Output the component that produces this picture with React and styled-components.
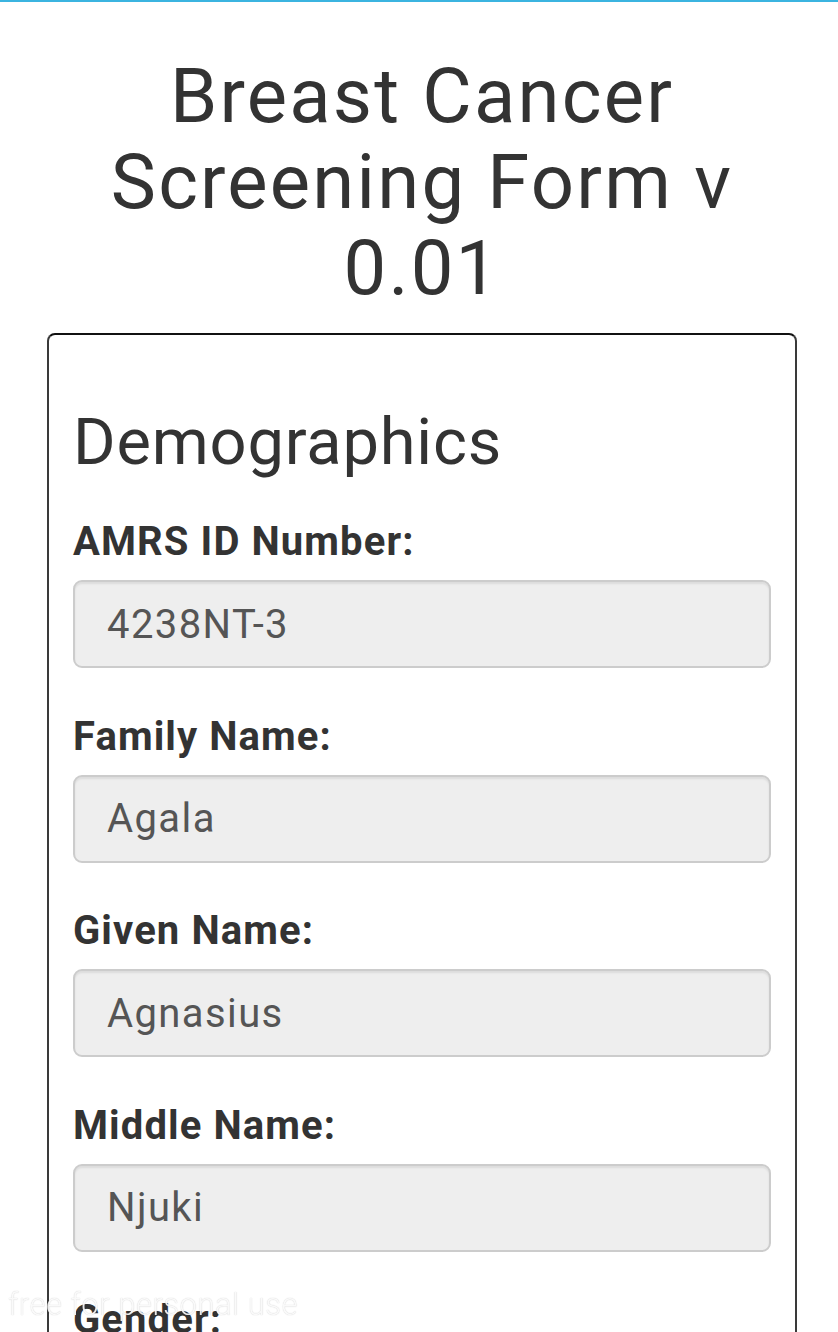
import React from "react";
import styled, { createGlobalStyle } from "styled-components";

const GlobalStyle = createGlobalStyle`
  html, body {
    margin: 0;
    padding: 0;
    background: #fff;
    font-family: Roboto, "Liberation Sans", Arial, sans-serif;
    color: #333;
  }
`;

const TopBar = styled.div`
  height: 2px;
  background: #3bb4e0;
`;

const Page = styled.div`
  width: 750px;
  padding-left: 47px;
`;

const Title = styled.h1`
  margin: 51px 0 22px;
  font-size: 76px;
  line-height: 86px;
  font-weight: 400;
  letter-spacing: 2.2px;
  text-align: center;
  color: #333;
`;

const Card = styled.div`
  border: 2px solid #3a3a3a;
  border-top-color: #111;
  border-radius: 8px;
  padding: 72px 24px 40px;
`;

const SectionTitle = styled.h2`
  margin: 0 0 38px;
  font-size: 65px;
  line-height: 70px;
  font-weight: 400;
  letter-spacing: 0.8px;
  color: #333;
`;

const Field = styled.div`
  margin-bottom: 41.5px;
`;

const Label = styled.label`
  display: block;
  margin-bottom: 12px;
  font-size: 40px;
  line-height: 53px;
  font-weight: 700;
  letter-spacing: 1.1px;
  color: #333;
`;

const Input = styled.input`
  display: block;
  box-sizing: border-box;
  width: 100%;
  height: 88px;
  padding: 0 32px;
  border: 2px solid #ccc;
  border-radius: 9px;
  background: #eee;
  box-shadow: inset 0 2px 2px rgba(0, 0, 0, 0.075);
  font-family: inherit;
  font-size: 40px;
  letter-spacing: 1.4px;
  color: #555;
  outline: none;
`;

const Watermark = styled.div`
  position: fixed;
  left: 8px;
  bottom: 9px;
  font-size: 31px;
  font-weight: 300;
  letter-spacing: 0.5px;
  color: rgba(255, 255, 255, 0.9);
  text-shadow: 0 0 1px rgba(0, 0, 0, 0.25);
  pointer-events: none;
  z-index: 5;
`;

const BottomEdge = styled.div`
  position: fixed;
  left: 0;
  right: 0;
  bottom: 0;
  height: 2px;
  background: #ccc;
  z-index: -1;
`;

const fields = [
  { label: "AMRS ID Number:", value: "4238NT-3" },
  { label: "Family Name:", value: "Agala" },
  { label: "Given Name:", value: "Agnasius" },
  { label: "Middle Name:", value: "Njuki" },
  { label: "Gender:", value: "Female" },
];

export default function App() {
  return (
    <>
      <GlobalStyle />
      <TopBar />
      <Page>
        <Title>Breast Cancer Screening Form v 0.01</Title>
        <Card>
          <SectionTitle>Demographics</SectionTitle>
          {fields.map((f) => (
            <Field key={f.label}>
              <Label>{f.label}</Label>
              <Input readOnly value={f.value} />
            </Field>
          ))}
        </Card>
      </Page>
      <Watermark>free for personal use</Watermark>
      <BottomEdge />
    </>
  );
}
